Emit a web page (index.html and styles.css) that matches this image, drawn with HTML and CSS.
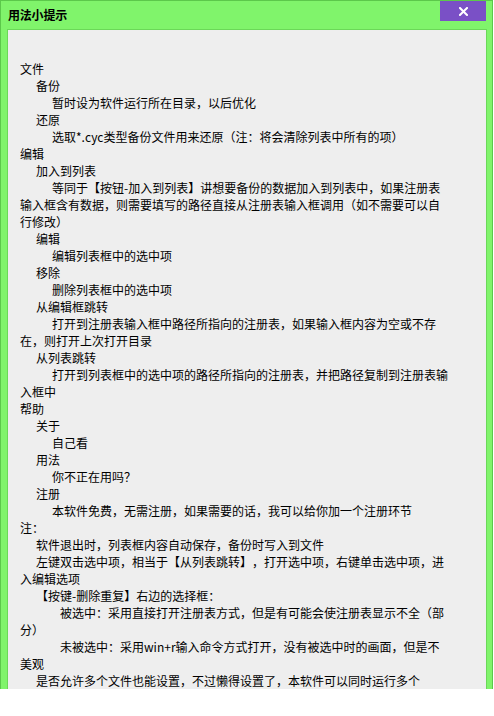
FILE: index.html
```html
<!DOCTYPE html>
<html lang="zh-CN">
<head>
<meta charset="utf-8">
<title>用法小提示</title>
<link rel="stylesheet" href="styles.css">
</head>
<body>
<div class="window">
  <div class="titlebar">
    <span class="title">用法小提示</span>
    <div class="close" aria-label="关闭">
      <svg width="9" height="9" viewBox="0 0 9 9"><path d="M1 1 L8 8 M8 1 L1 8" stroke="#fff" stroke-width="2" stroke-linecap="square" fill="none"/></svg>
    </div>
  </div>
  <div class="textbox">
    <div class="text">
      <p class="l0">文件</p>
      <p class="l1">备份</p>
      <p class="l2">暂时设为软件运行所在目录，以后优化</p>
      <p class="l1">还原</p>
      <p class="l2">选取*.cyc类型备份文件用来还原（注：将会清除列表中所有的项）</p>
      <p class="l0">编辑</p>
      <p class="l1">加入到列表</p>
      <p class="l2">等同于【按钮-加入到列表】讲想要备份的数据加入到列表中，如果注册表输入框含有数据，则需要填写的路径直接从注册表输入框调用（如不需要可以自行修改）</p>
      <p class="l1">编辑</p>
      <p class="l2">编辑列表框中的选中项</p>
      <p class="l1">移除</p>
      <p class="l2">删除列表框中的选中项</p>
      <p class="l1">从编辑框跳转</p>
      <p class="l2">打开到注册表输入框中路径所指向的注册表，如果输入框内容为空或不存在，则打开上次打开目录</p>
      <p class="l1">从列表跳转</p>
      <p class="l2">打开到列表框中的选中项的路径所指向的注册表，并把路径复制到注册表输入框中</p>
      <p class="l0">帮助</p>
      <p class="l1">关于</p>
      <p class="l2">自己看</p>
      <p class="l1">用法</p>
      <p class="l2">你不正在用吗？</p>
      <p class="l1">注册</p>
      <p class="l2">本软件免费，无需注册，如果需要的话，我可以给你加一个注册环节</p>
      <p class="l0">注：</p>
      <p class="l1">软件退出时，列表框内容自动保存，备份时写入到文件</p>
      <p class="l1">左键双击选中项，相当于【从列表跳转】，打开选中项，右键单击选中项，进入编辑选项</p>
      <p class="l1">【按键-删除重复】右边的选择框：</p>
      <p class="l3">被选中：采用直接打开注册表方式，但是有可能会使注册表显示不全（部分）</p>
      <p class="l3">未被选中：采用win+r输入命令方式打开，没有被选中时的画面，但是不美观</p>
      <p class="l1">是否允许多个文件也能设置，不过懒得设置了，本软件可以同时运行多个</p>
    </div>
  </div>
</div>
</body>
</html>
```
FILE: styles.css
```css
html, body {
  margin: 0;
  padding: 0;
  background: #ffffff;
}

body {
  font-family: "Noto Sans CJK SC", "Noto Sans", sans-serif;
  font-size: 12px;
  color: #000;
}

.window {
  width: 493px;
  height: 689px;
  box-sizing: border-box;
  border: 1px solid #5cc84b;
  border-bottom: none;
  background: #80f46b;
  overflow: hidden;
  display: flex;
  flex-direction: column;
}

.titlebar {
  height: 28px;
  flex: none;
  display: flex;
  align-items: flex-start;
  justify-content: space-between;
  padding-left: 7px;
  padding-right: 6px;
}

.title {
  font-weight: bold;
  font-size: 12px;
  line-height: 17px;
  margin-top: 5px;
  letter-spacing: -0.2px;
}

.close {
  width: 46px;
  height: 20px;
  background: #7a50c6;
  display: flex;
  align-items: center;
  justify-content: center;
}

.close svg {
  display: block;
}

.textbox {
  flex: 1;
  margin: 0 5px 0 6px;
  border: 1px solid #6bd858;
  border-bottom: none;
  background: #eeeeee;
  padding: 30px 0 0 12px;
  overflow: hidden;
}

.text {
  width: 430px;
  text-spacing-trim: space-all;
}

.text p {
  margin: 0;
  line-height: 17px;
  white-space: normal;
  line-break: normal;
}

.l0 { text-indent: 0; }
.l1 { text-indent: 16px; }
.l2 { text-indent: 32px; }
.l3 { text-indent: 40px; }
```
